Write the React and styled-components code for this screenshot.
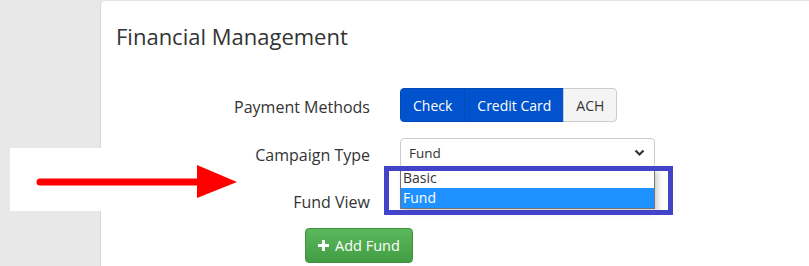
import styled, { createGlobalStyle } from "styled-components";

const Global = createGlobalStyle`
  html, body {
    margin: 0;
    padding: 0;
    background: #e8e8e8;
    font-family: "Open Sans", "Liberation Sans", sans-serif;
    color: #333;
    overflow: hidden;
  }
`;

const Page = styled.div`
  position: relative;
  display: flex;
  width: 809px;
  height: 266px;
`;

const Sidebar = styled.div`
  width: 100px;
  flex: none;
`;

const Card = styled.div`
  flex: 1;
  background: #fff;
  border-left: 1px solid #d6d6d6;
  border-top: 1px solid #e2e2e2;
  border-top-left-radius: 5px;
  padding: 19px 15px 0 15px;
`;

const Title = styled.h3`
  margin: 0 0 36px 0;
  font-size: 22px;
  font-weight: 400;
  color: #333;
  line-height: 32px;
`;

const Form = styled.div`
  display: grid;
  grid-template-columns: 254px 255px;
  column-gap: 30px;
  row-gap: 15px;
  align-items: center;
`;

const Label = styled.div`
  text-align: right;
  font-size: 16px;
  line-height: 22px;
  padding-top: ${(p) => p.$shift || 0}px;
`;

const BtnGroup = styled.div`
  display: flex;
  width: max-content;
`;

const ToggleBtn = styled.button`
  font-family: inherit;
  font-size: 14px;
  height: 34px;
  padding: 0 12px;
  border: 1px solid ${(p) => (p.$on ? "#004bb8" : "#ccc")};
  background: ${(p) => (p.$on ? "#0053cc" : "#f4f4f4")};
  color: ${(p) => (p.$on ? "#fff" : "#333")};
  margin-left: -1px;
  &:first-child {
    margin-left: 0;
    border-radius: 4px 0 0 4px;
  }
  &:last-child {
    border-radius: 0 4px 4px 0;
  }
`;

const SelectWrap = styled.div`
  position: relative;
  width: 255px;
  margin-top: 1px;
`;

const Select = styled.div`
  box-sizing: border-box;
  height: 30px;
  border: 1px solid #ccc;
  border-radius: 4px;
  display: flex;
  align-items: center;
  justify-content: space-between;
  padding: 0 9px 0 8px;
  font-size: 13.5px;
  color: #333;
  background: #fff;
`;

const Options = styled.div`
  position: absolute;
  left: 0;
  top: 30px;
  width: 255px;
  box-sizing: border-box;
  background: #fff;
  border: 1px solid #767676;
  border-top: none;
  box-shadow: 3px 3px 6px rgba(0, 0, 0, 0.2);
  z-index: 2;
`;

const Option = styled.div`
  height: 20px;
  line-height: 20px;
  padding-left: 2px;
  font-size: 14px;
  background: ${(p) => (p.$sel ? "#1e90ff" : "#fff")};
  color: ${(p) => (p.$sel ? "#fff" : "#333")};
`;

const Spacer = styled.div`
  height: 30px;
`;

const AddBtn = styled.button`
  grid-column: 1 / span 2;
  justify-self: start;
  margin: 0 0 0 189px;
  height: 35px;
  padding: 0 12px;
  border: 1px solid #3e8f3e;
  border-radius: 4px;
  background: linear-gradient(#5cb85c, #439d43);
  color: #fff;
  font-family: inherit;
  font-size: 14.5px;
  display: flex;
  align-items: center;
  gap: 6px;
`;

const Callout = styled.div`
  position: absolute;
  left: 10px;
  top: 148px;
  width: 91px;
  height: 63px;
  background: #fff;
`;

const Arrow = styled.svg`
  position: absolute;
  left: 30px;
  top: 160px;
  z-index: 3;
`;

const Highlight = styled.div`
  position: absolute;
  left: 384px;
  top: 166px;
  width: 289px;
  height: 49px;
  box-sizing: border-box;
  border: 5px solid #4343c9;
  z-index: 3;
`;

const Chevron = () => (
  <svg width="11" height="8" viewBox="0 0 11 8">
    <path d="M1.5 1.5 L5.5 5.5 L9.5 1.5" stroke="#333" strokeWidth="2.2" fill="none" />
  </svg>
);

export default function App() {
  return (
    <>
      <Global />
      <Page>
        <Sidebar />
        <Card>
          <Title>Financial Management</Title>
          <Form>
            <Label $shift={3}>Payment Methods</Label>
            <BtnGroup>
              <ToggleBtn $on>Check</ToggleBtn>
              <ToggleBtn $on>Credit Card</ToggleBtn>
              <ToggleBtn>ACH</ToggleBtn>
            </BtnGroup>
            <Label $shift={5}>Campaign Type</Label>
            <SelectWrap>
              <Select>
                Fund
                <Chevron />
              </Select>
              <Options>
                <Option>Basic</Option>
                <Option $sel>Fund</Option>
              </Options>
            </SelectWrap>
            <Label $shift={7}>Fund View</Label>
            <Spacer />
            <AddBtn>
              <svg width="11" height="11" viewBox="0 0 11 11">
                <path d="M4 0h3v4h4v3H7v4H4V7H0V4h4z" fill="#fff" />
              </svg>
              Add Fund
            </AddBtn>
          </Form>
        </Card>
        <Callout />
        <Arrow width="210" height="42" viewBox="0 0 210 42">
          <line x1="10" y1="22" x2="170" y2="22" stroke="#ff0000" strokeWidth="7" strokeLinecap="round" />
          <polygon points="167,5 207,22 167,38" fill="#ff0000" />
        </Arrow>
        <Highlight />
      </Page>
    </>
  );
}
